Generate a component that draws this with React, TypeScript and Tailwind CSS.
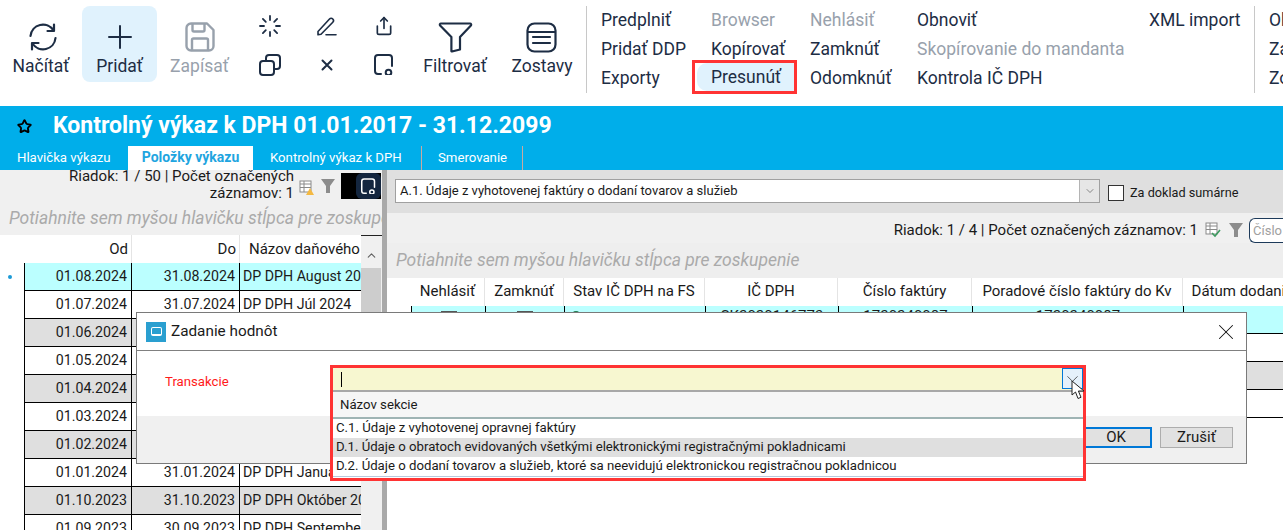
import { ChevronDown, ChevronUp, Loader, Share, Star, X } from 'lucide-react';
import type { ReactNode } from 'react';

const navy = '#1d2d44';
const muted = '#98a1ac';

const leftRows = [
  ['01.08.2024', '31.08.2024', 'DP DPH August 2024'],
  ['01.07.2024', '31.07.2024', 'DP DPH Júl 2024'],
  ['01.06.2024', '30.06.2024', 'DP DPH Jún 2024'],
  ['01.05.2024', '31.05.2024', 'DP DPH Máj 2024'],
  ['01.04.2024', '30.04.2024', 'DP DPH Apríl 2024'],
  ['01.03.2024', '31.03.2024', 'DP DPH Marec 2024'],
  ['01.02.2024', '29.02.2024', 'DP DPH Február 2024'],
  ['01.01.2024', '31.01.2024', 'DP DPH Január 2024'],
  ['01.10.2023', '31.10.2023', 'DP DPH Október 2023'],
  ['01.09.2023', '30.09.2023', 'DP DPH September 2023'],
];

const rightColumns = [
  { label: 'Nehlásiť', width: 'w-[74px]', value: '' },
  { label: 'Zamknúť', width: 'w-[79px]', value: '' },
  { label: 'Stav IČ DPH na FS', width: 'w-[141px]', value: '' },
  { label: 'IČ DPH', width: 'w-[133px]', value: 'SK2020146773' },
  { label: 'Číslo faktúry', width: 'w-[134px]', value: '1720240087' },
  { label: 'Poradové číslo faktúry do Kv', width: 'w-[211px]', value: '1720240087' },
  { label: 'Dátum dodania', width: 'w-[120px]', value: '' },
];

const ToolButton = ({ icon, label, isMuted, active }: { icon: ReactNode; label: string; isMuted?: boolean; active?: boolean }) => (
  <div
    className={`flex h-[76px] flex-col items-center justify-end rounded-[8px] pb-[5px] text-[17.5px] leading-[22px] ${active ? 'bg-[#e0f2fd]' : ''} ${isMuted ? 'text-[#98a1ac]' : 'text-[#1d2d44]'}`}
  >
    <div className="flex h-[36px] items-center justify-center">{icon}</div>
    <span>{label}</span>
  </div>
);

const MenuItem = ({ children, isMuted }: { children: string; isMuted?: boolean }) => (
  <div className={`h-[29px] whitespace-nowrap text-[17.5px] leading-[29px] ${isMuted ? 'text-[#98a1ac]' : 'text-[#1d2d44]'}`}>{children}</div>
);

const SearchFile = ({ color = navy, size = 20 }: { color?: string; size?: number }) => (
  <svg className="shrink-0" width={size} height={size + 1} viewBox="0 0 20 21" fill="none" stroke={color} strokeWidth="2" strokeLinecap="round">
    <path d="M7 20H4a3 3 0 0 1-3-3V4a3 3 0 0 1 3-3h11a3 3 0 0 1 3 3v8" />
    <circle cx="14.5" cy="18.5" r="2.8" />
  </svg>
);

const Toolbar = () => (
  <div className="flex h-[106px] items-start overflow-hidden bg-white pt-[6px]">
    <div className="flex w-[82px] shrink-0 justify-center">
      <ToolButton
        label="Načítať"
        icon={
          <svg className="ml-[4px] shrink-0" width="30" height="32" viewBox="0 0 30 32" fill="none" stroke={navy} strokeWidth="2.2" strokeLinecap="round" strokeLinejoin="round">
            <path d="M2.5 15A12.5 12.5 0 0 1 25.5 9.5" />
            <path d="M26 3.5V10h-6.5" />
            <path d="M27.5 17A12.5 12.5 0 0 1 4.5 22.5" />
            <path d="M4 28.5V22h6.5" />
          </svg>
        }
      />
    </div>
    <div className="w-[75px] shrink-0">
      <ToolButton
        active
        label="Pridať"
        icon={
          <svg className="shrink-0" width="24" height="24" viewBox="0 0 24 24" fill="none" stroke={navy} strokeWidth="2" strokeLinecap="round">
            <path d="M12 1v22M1 12h22" />
          </svg>
        }
      />
    </div>
    <div className="w-[85px] shrink-0">
      <ToolButton
        isMuted
        label="Zapísať"
        icon={
          <svg className="shrink-0" width="30" height="30" viewBox="0 0 30 30" fill="none" stroke={muted} strokeWidth="2.4" strokeLinejoin="round">
            <path d="M6 1.5h16l6.5 6.5v16a4.5 4.5 0 0 1-4.5 4.5H6A4.5 4.5 0 0 1 1.5 24V6A4.5 4.5 0 0 1 6 1.5z" />
            <path d="M7.5 1.5V8a1.5 1.5 0 0 0 1.5 1.5h9A1.5 1.5 0 0 0 19.5 8V1.5" />
            <path d="M7 28.5V18a1.5 1.5 0 0 1 1.5-1.5h13A1.5 1.5 0 0 1 23 18v10.5" />
          </svg>
        }
      />
    </div>
    <div className="grid h-[78px] w-[170px] shrink-0 grid-cols-3 grid-rows-[39px_39px] place-items-center">
      <Loader size={24} strokeWidth={1.8} color={navy} />
      <svg width="20" height="20" viewBox="0 0 20 20" fill="none" stroke={navy} strokeWidth="1.6" strokeLinejoin="round" strokeLinecap="round">
        <path d="M1 15.5 12.5 3a2.3 2.3 0 0 1 3.3 0 2.3 2.3 0 0 1 0 3.2L4 18.3l-3 .5z" />
        <path d="M9 18.8h10" />
      </svg>
      <Share size={20} strokeWidth={2} color={navy} />
      <svg width="22" height="22" viewBox="0 0 22 22" fill="none" stroke={navy} strokeWidth="2" strokeLinejoin="round">
        <rect x="1" y="7" width="14" height="14" rx="3" />
        <path d="M7 7V4a3 3 0 0 1 3-3h8a3 3 0 0 1 3 3v8a3 3 0 0 1-3 3h-3" />
      </svg>
      <svg width="12" height="12" viewBox="0 0 12 12" fill="none" stroke={navy} strokeWidth="2" strokeLinecap="round">
        <path d="M1.5 1.5l9 9M10.5 1.5l-9 9" />
      </svg>
      <SearchFile />
    </div>
    <div className="flex w-[86px] shrink-0 justify-center">
      <ToolButton
        label="Filtrovať"
        icon={
          <svg className="shrink-0" width="35" height="31" viewBox="0 0 35 31" fill="none" stroke={navy} strokeWidth="2.2" strokeLinejoin="round">
            <path d="M3 1.5h29a1.2 1.2 0 0 1 .9 2L22 15v12.5L14 29.5a.5.5 0 0 1-.6-.5V15L2.1 3.5a1.2 1.2 0 0 1 .9-2z" />
          </svg>
        }
      />
    </div>
    <div className="flex w-[88px] shrink-0 justify-center">
      <ToolButton
        label="Zostavy"
        icon={
          <svg className="shrink-0" width="31" height="31" viewBox="0 0 31 31" fill="none" stroke={navy} strokeWidth="2.2" strokeLinecap="round">
            <rect x="1.5" y="1.5" width="28" height="28" rx="7" />
            <path d="M2 10h27M7 15h17M7 21h17" />
          </svg>
        }
      />
    </div>
    <div className="h-[87px] w-px shrink-0 bg-[#c8c8c8]" />
    <div className="ml-[14px] w-[110px] shrink-0">
      <MenuItem>Predplniť</MenuItem>
      <MenuItem>Pridať DDP</MenuItem>
      <MenuItem>Exporty</MenuItem>
    </div>
    <div className="w-[99px] shrink-0">
      <MenuItem isMuted>Browser</MenuItem>
      <MenuItem>Kopírovať</MenuItem>
      <MenuItem>Presunúť</MenuItem>
    </div>
    <div className="w-[107px] shrink-0">
      <MenuItem isMuted>Nehlásiť</MenuItem>
      <MenuItem>Zamknúť</MenuItem>
      <MenuItem>Odomknúť</MenuItem>
    </div>
    <div className="w-[232px] shrink-0">
      <MenuItem>Obnoviť</MenuItem>
      <MenuItem isMuted>Skopírovanie do mandanta</MenuItem>
      <MenuItem>Kontrola IČ DPH</MenuItem>
    </div>
    <div className="w-[105px] shrink-0">
      <MenuItem>XML import</MenuItem>
    </div>
    <div className="h-[87px] w-px shrink-0 bg-[#c8c8c8]" />
    <div className="ml-[14px] shrink-0">
      <MenuItem>Ob</MenuItem>
      <MenuItem>Za</MenuItem>
      <MenuItem>Zo</MenuItem>
    </div>
  </div>
);

const Header = () => (
  <div className="h-[64px] bg-[#00aeea] text-white">
    <div className="flex h-[40px] items-center pl-[17px]">
      <Star size={15} strokeWidth={3} color="#000" />
      <span className="ml-[21px] text-[23px] font-bold">Kontrolný výkaz k DPH 01.01.2017 - 31.12.2099</span>
    </div>
    <div className="flex h-[24px] text-[13.2px] leading-[23px]">
      <div className="w-[128px] pl-[17px]">Hlavička výkazu</div>
      <div className="w-[125px] bg-white text-center text-[14px] font-bold text-[#1fa5e0]">Položky výkazu</div>
      <div className="w-[169px] border-r border-[#c9a9a0] pl-[17px]">Kontrolný výkaz k DPH</div>
      <div className="w-[101px] border-r border-[#c9a9a0] pl-[16px]">Smerovanie</div>
    </div>
  </div>
);

const LeftPanel = () => (
  <div className="h-[360px] w-[382px] shrink-0 overflow-hidden bg-white">
    <div className="h-[65px] overflow-hidden bg-[#f0f0f0]">
      <div className="flex h-[30px]">
        <div className="-mt-[2px] w-[294px] pl-[50px] text-right text-[15px] leading-[17px] text-[#1a1a1a]">
          Riadok: 1 / 50 | Počet označených záznamov: 1
        </div>
        <svg className="ml-[5px] mt-[10px]" width="16" height="16" viewBox="0 0 16 16" fill="none">
          <rect x="1" y="1" width="11" height="11" fill="#fff" stroke="#8a8a8a" />
          <path d="M1 4h11M1 7.5h11M5 1v11" stroke="#8a8a8a" />
          <path d="M11 8l4 7H7z" fill="#f4b942" />
        </svg>
        <svg className="ml-[5px] mt-[8px]" width="16" height="16" viewBox="0 0 16 16">
          <path d="M1 1h14L10 8v7H6V8z" fill="#8c8c8c" />
        </svg>
        <div className="ml-[5px] mt-[3px] flex h-[26px] w-[40px] justify-end bg-black">
          <div className="flex h-[26px] w-[25px] items-center justify-center rounded-[6px] bg-[#14263f]">
            <SearchFile color="#fff" size={15} />
          </div>
        </div>
      </div>
      <div className="whitespace-nowrap pl-[9px] pt-[8px] text-[17.5px] italic leading-[20px] text-[#aaaaaa]">Potiahnite sem myšou hlavičku stĺpca pre zoskupenie</div>
    </div>
    <div className="flex">
      <div className="w-[361px] shrink-0 overflow-hidden">
        <div className="flex h-[28px] bg-white text-[15px] leading-[28px] text-[#1a1a1a]">
          <div className="w-[24px] shrink-0" />
          <div className="w-[108px] shrink-0 border-r border-[#e4e4e4] pr-[3px] text-right">Od</div>
          <div className="w-[108px] shrink-0 border-r border-[#e4e4e4] pr-[3px] text-right">Do</div>
          <div className="whitespace-nowrap pl-[9px]">Názov daňového priznania</div>
        </div>
        {leftRows.map((row, i) => (
          <div key={row[0]} className="flex h-[28px] text-[14.2px] leading-[27px] text-[#1a1a1a]">
            <div className="flex w-[24px] shrink-0 items-center justify-center pr-[4px]">
              {i === 0 && <div className="h-[4px] w-[4px] rounded-full bg-[#1c9ad6]" />}
            </div>
            <div className={`flex min-w-0 flex-1 border-b border-l border-black ${i === 0 ? 'bg-[#bbffff]' : i % 2 === 1 ? 'bg-white' : 'bg-[#dfdfdf]'}`}>
              <div className="w-[107px] shrink-0 border-r border-black pr-[4px] text-right">{row[0]}</div>
              <div className="w-[108px] shrink-0 border-r border-black pr-[4px] text-right">{row[1]}</div>
              <div className="whitespace-nowrap pl-[3px]">{row[2]}</div>
            </div>
          </div>
        ))}
      </div>
      <div className="w-[21px] shrink-0 bg-[#f0f0f0]">
        <div className="flex h-[33px] items-center justify-center border-t border-[#222] pt-[6px]">
          <ChevronUp size={13} strokeWidth={2} color="#606060" />
        </div>
        <div className="h-[212px] w-[20px] bg-[#cdcdcd]" />
      </div>
    </div>
  </div>
);

const RightPanel = () => (
  <div className="h-[360px] min-w-0 flex-1 overflow-hidden bg-white">
    <div className="flex h-[43px] items-start bg-[#dfdfdf] pl-[8px] pt-[9px]">
      <div className="flex h-[24px] w-[705px] shrink-0 items-center justify-between border border-[#a0a0a0] bg-white pl-[4px] text-[13px] text-[#1a1a1a]">
        <span>A.1. Údaje z vyhotovenej faktúry o dodaní tovarov a služieb</span>
        <div className="flex h-[22px] w-[20px] items-center justify-center border-l border-[#b4b4b4] bg-[#e6e6e6]">
          <ChevronDown size={12} strokeWidth={1.2} color="#444" />
        </div>
      </div>
      <div className="ml-[8px] mt-[6px] h-[16px] w-[16px] shrink-0 border border-[#333] bg-white" />
      <span className="ml-[6px] mt-[6px] whitespace-nowrap text-[12.7px] leading-[16px] text-[#1a1a1a]">Za doklad sumárne</span>
    </div>
    <div className="flex h-[30px] items-center justify-end bg-[#f0f0f0] pt-[4px] text-[15px] text-[#1a1a1a]">
      <span className="whitespace-nowrap">Riadok: 1 / 4 | Počet označených záznamov: 1</span>
      <svg className="ml-[7px] shrink-0" width="16" height="16" viewBox="0 0 16 16" fill="none">
        <rect x="1" y="1" width="11" height="11" fill="#fff" stroke="#8a8a8a" />
        <path d="M1 4h11M1 7.5h11M5 1v11" stroke="#8a8a8a" />
        <path d="M7 11l3 3 5-6" stroke="#3c9a5f" strokeWidth="1.6" />
      </svg>
      <svg className="ml-[7px] shrink-0" width="16" height="16" viewBox="0 0 16 16">
        <path d="M1 1h14L10 8v7H6V8z" fill="#8c8c8c" />
      </svg>
      <div className="ml-[5px] h-[25px] w-[34px] shrink-0 overflow-hidden whitespace-nowrap rounded-l-[6px] border border-r-0 border-[#1d3a5a] bg-white pl-[3px] text-[13px] leading-[23px] text-[#a0a0a0]">Číslo</div>
    </div>
    <div className="h-[35px] whitespace-nowrap bg-[#eeeeee] pl-[9px] pt-[7px] text-[17.5px] italic leading-[20px] text-[#aaaaaa]">Potiahnite sem myšou hlavičku stĺpca pre zoskupenie</div>
    <div className="flex h-[28px] pl-[24px] text-[15px] leading-[27px] text-[#1a1a1a]">
      {rightColumns.map((c) => (
        <div key={c.label} className={`${c.width} shrink-0 whitespace-nowrap border-r border-[#e4e4e4] text-center`}>
          {c.label}
        </div>
      ))}
    </div>
    <div className="ml-[24px] flex h-[28px] border-b border-black bg-[#bbffff] text-[15px] leading-[14px] text-[#1a1a1a]">
      {rightColumns.map((c, i) => (
        <div key={c.label} className={`${c.width} flex shrink-0 justify-center border-l border-black`}>
          {i < 2 && <div className="mt-[5px] h-[14px] w-[16px] border border-[#555] bg-[#eee]" />}
          {i === 2 && <div className="mr-[118px] mt-[5px] h-[10px] w-[10px] rounded-full bg-[#1e7a4c]" />}
          {c.value && <span className="pt-[3px]">{c.value}</span>}
        </div>
      ))}
    </div>
    <div className="ml-[24px] h-[28px] border-b border-black bg-white" />
    <div className="ml-[24px] h-[28px] border-b border-black bg-[#dfdfdf]" />
    <div className="ml-[24px] h-[28px] border-b border-black bg-white" />
  </div>
);

const Cursor = () => (
  <svg className="absolute left-[738px] top-[12px]" width="15" height="20" viewBox="0 0 15 20">
    <path d="M1 1v14l3.5-3 2.5 6.5 3-1.2-2.6-6.3H13z" fill="#fff" stroke="#222" strokeWidth="1" />
  </svg>
);

const ValuesDialog = () => (
  <div className="absolute left-[136px] top-[312px] h-[152px] w-[1111px] border border-[#7a7a7a] bg-white">
    <div className="flex h-[38px] items-center border-b border-[#808080] pl-[9px] text-[15.3px] text-[#1a1a1a]">
      <div className="flex h-[20px] w-[20px] items-center justify-center bg-[#2a9fd0]">
        <div className="h-[9px] w-[11px] rounded-[2px] border-[1.5px] border-b-[2px] border-white" />
      </div>
      <span className="ml-[5px]">Zadanie hodnôt</span>
      <X size={26} strokeWidth={0.95} color="#111" className="ml-auto mr-[7px]" />
    </div>
    <div className="h-[65px] pl-[28px] pt-[23px] text-[13.2px] leading-[16px] text-[#ff1a1a]">Transakcie</div>
    <div className="flex h-[47px] items-start justify-end gap-[8px] bg-[#f0f0f0] pr-[13px] pt-[11px] text-[15px] text-[#1a1a1a]">
      <div className="h-[21px] w-[72px] border-2 border-[#0078d7] bg-[#e1e1e1] text-center leading-[17px]">OK</div>
      <div className="h-[21px] w-[73px] border border-[#adadad] bg-[#e1e1e1] text-center leading-[19px]">Zrušiť</div>
    </div>
    <div className="absolute left-[193px] top-[52px] h-[116px] w-[756px] border-[3px] border-[#ff3333] bg-white text-[13.2px] text-[#1a1a1a]">
      <div className="relative flex h-[24px] items-center border-b-2 border-[#a8a8a8] bg-[#f7f7d0] pl-[8px]">
        <div className="h-[15px] w-px bg-black" />
        <div className="absolute right-0 top-0 flex h-[21px] w-[21px] items-center justify-center border border-[#0078d7] bg-[#e5f1fb]">
          <ChevronDown size={20} strokeWidth={0.9} color="#222" />
        </div>
      </div>
      <div className="flex h-[27px] items-center border-b-2 border-[#9fb4b4] bg-[#f6f6f6] pl-[7px]">Názov sekcie</div>
      <div className="h-[19px] whitespace-nowrap pl-[3px] leading-[17px]">C.1. Údaje z vyhotovenej opravnej faktúry</div>
      <div className="h-[19px] whitespace-nowrap bg-[#dfdfdf] pl-[3px] leading-[17px]">D.1. Údaje o obratoch evidovaných všetkými elektronickými registračnými pokladnicami</div>
      <div className="h-[20px] whitespace-nowrap border-b border-[#b8c8dc] pl-[3px] leading-[17px]">D.2. Údaje o dodaní tovarov a služieb, ktoré sa neevidujú elektronickou registračnou pokladnicou</div>
      <Cursor />
    </div>
  </div>
);

export default function App() {
  return (
    <div className="relative h-[530px] w-[1283px] overflow-hidden bg-white font-['Roboto',sans-serif]">
      <Toolbar />
      <Header />
      <div className="flex">
        <LeftPanel />
        <div className="h-[360px] w-[5px] shrink-0 bg-[#a9a9a9]" />
        <RightPanel />
      </div>
      <div className="absolute left-[692px] top-[60px] h-[34px] w-[105px] border-[3px] border-[#ff3333]">
        <div className="ml-[2px] flex h-full items-center rounded-l-[10px] bg-[#e0f2fd] pl-[14px] text-[17.5px] text-[#1d2d44]">Presunúť</div>
      </div>
      <ValuesDialog />
    </div>
  );
}
